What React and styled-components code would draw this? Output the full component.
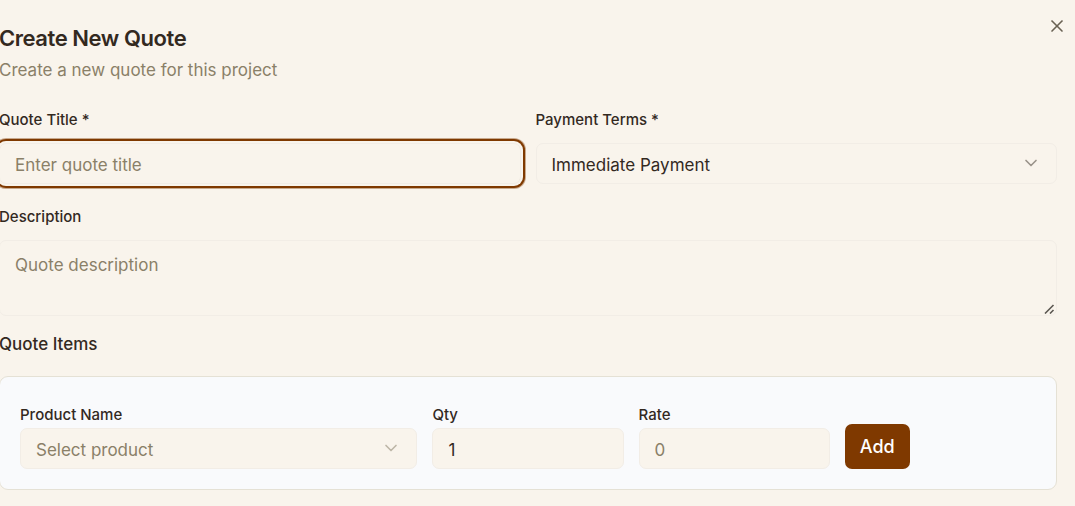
import React from 'react';
import styled, { createGlobalStyle, css } from 'styled-components';
import { ChevronDown, X } from 'lucide-react';

const color = {
  page: '#f9f4ec',
  text: '#33291f',
  muted: '#8a8068',
  line: '#f2ede6',
  cardLine: '#e5e1d5',
  card: '#f9fafc',
  brand: '#7f3900',
};

const GlobalStyle = createGlobalStyle`
  *, *::before, *::after { box-sizing: border-box; }
  body {
    margin: 0;
    background: ${color.page};
    color: ${color.text};
    font-family: Inter, "Liberation Sans", sans-serif;
  }
`;

const Dialog = styled.main`
  position: relative;
  margin-left: -1px;
  padding: 24px 18px 16px 0;
`;

const CloseButton = styled.button`
  position: absolute;
  top: 16px;
  right: 8px;
  display: flex;
  padding: 0;
  border: 0;
  background: none;
  color: #696153;
  cursor: pointer;
`;

const Title = styled.h1`
  margin: 0;
  font-size: 22px;
  line-height: 28px;
  font-weight: 600;
  letter-spacing: -0.02em;
`;

const Subtitle = styled.p`
  margin: 4px 0 0;
  color: ${color.muted};
  font-size: 17px;
  line-height: 28px;
`;

const Form = styled.form`
  display: flex;
  flex-direction: column;
  margin-top: 24px;
`;

const TwoColumns = styled.div`
  display: grid;
  grid-template-columns: 1fr 1fr;
  gap: 15px;
  margin-bottom: 21px;
`;

const Field = styled.div`
  display: flex;
  flex-direction: column;
  gap: ${(p) => (p.$tight ? 1 : 11)}px;
  min-width: 0;
  grid-column: span ${(p) => p.$span || 1};
`;

const Label = styled.label`
  font-size: 15px;
  line-height: 24px;
  font-weight: 500;
`;

const control = css`
  display: block;
  width: 100%;
  height: 41px;
  margin: 0;
  padding: 2px 15px 0;
  border: 1px solid ${color.line};
  border-radius: 7px;
  background: ${color.page};
  color: ${color.text};
  font: 400 17px/28px Inter, "Liberation Sans", sans-serif;
  outline: none;
  &::placeholder { color: ${color.muted}; opacity: 1; }
`;

const Input = styled.input`
  ${control}
  appearance: textfield;
  ${(p) => p.$active && css`
    box-shadow: 0 0 0 2px ${color.page}, 0 0 0 4px ${color.brand}, 0 0 0 5px #7f390066;
  `}
`;

const ControlBox = styled.div`
  position: relative;
`;

const TextArea = styled.textarea`
  ${control}
  height: 76px;
  padding: 10px 15px;
  resize: vertical;
  &::-webkit-resizer { background: transparent; }
`;

const Grip = styled.svg`
  position: absolute;
  right: 2px;
  bottom: 2px;
  stroke: #5c5852;
  stroke-width: 1.6;
  pointer-events: none;
`;

const Select = styled.select`
  ${control}
  appearance: none;
  color: ${(p) => (p.$empty ? color.muted : color.text)};
`;

const Chevron = styled(ChevronDown)`
  position: absolute;
  top: 10px;
  right: 16px;
  color: ${(p) => (p.$light ? '#bdb6a7' : '#9a938a')};
  pointer-events: none;
`;

const SectionTitle = styled.h2`
  margin: 14px 0 18px;
  font-size: 17px;
  line-height: 28px;
  font-weight: 500;
`;

const ItemCard = styled.section`
  display: grid;
  grid-template-columns: repeat(5, minmax(0, 1fr));
  align-items: end;
  gap: 15px;
  padding: 26px 20px 20px;
  border: 1px solid ${color.cardLine};
  border-radius: 9px;
  background: ${color.card};
`;

const AddButton = styled.button`
  justify-self: start;
  height: 45px;
  padding: 0 15px;
  border: 0;
  border-radius: 7px;
  background: ${color.brand};
  color: #fff;
  font: 500 18px/28px Inter, "Liberation Sans", sans-serif;
  cursor: pointer;
`;

export default function App() {
  return (
    <>
      <GlobalStyle />
      <Dialog>
        <Title>Create New Quote</Title>
        <Subtitle>Create a new quote for this project</Subtitle>
        <CloseButton type="button" aria-label="Close">
          <X size={20} strokeWidth={2} />
        </CloseButton>
        <Form onSubmit={(e) => e.preventDefault()}>
          <TwoColumns>
            <Field>
              <Label htmlFor="title">Quote Title *</Label>
              <Input id="title" placeholder="Enter quote title" $active />
            </Field>
            <Field>
              <Label htmlFor="terms">Payment Terms *</Label>
              <ControlBox>
                <Select id="terms" defaultValue="immediate">
                  <option value="immediate">Immediate Payment</option>
                </Select>
                <Chevron size={20} strokeWidth={2} />
              </ControlBox>
            </Field>
          </TwoColumns>
          <Field>
            <Label htmlFor="description">Description</Label>
            <ControlBox>
              <TextArea id="description" placeholder="Quote description" />
              <Grip width="11" height="10" viewBox="0 0 11 10" aria-hidden="true">
                <path d="M1 9.5 L9.5 1 M6 9.5 L9.5 6" fill="none" />
              </Grip>
            </ControlBox>
          </Field>
          <SectionTitle>Quote Items</SectionTitle>
          <ItemCard>
            <Field $span={2} $tight>
              <Label htmlFor="product">Product Name</Label>
              <ControlBox>
                <Select id="product" defaultValue="" $empty>
                  <option value="" disabled>Select product</option>
                </Select>
                <Chevron size={20} strokeWidth={2} $light />
              </ControlBox>
            </Field>
            <Field $tight>
              <Label htmlFor="qty">Qty</Label>
              <Input id="qty" type="number" defaultValue="1" />
            </Field>
            <Field $tight>
              <Label htmlFor="rate">Rate</Label>
              <Input id="rate" type="number" placeholder="0" />
            </Field>
            <AddButton type="submit">Add</AddButton>
          </ItemCard>
        </Form>
      </Dialog>
    </>
  );
}
